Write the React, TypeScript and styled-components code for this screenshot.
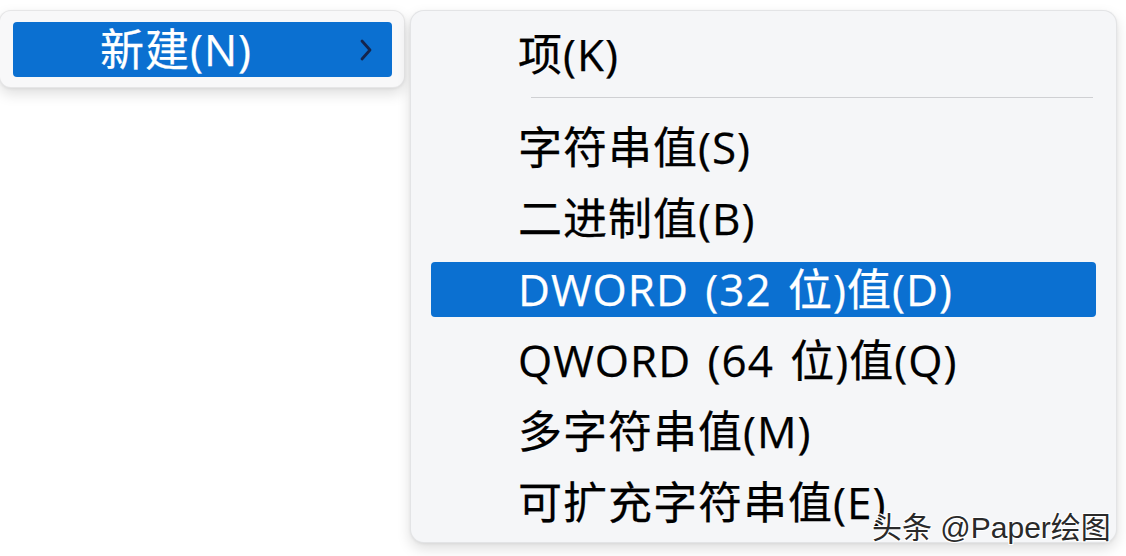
import React from "react";
import styled, { createGlobalStyle } from "styled-components";

const Global = createGlobalStyle`
  html, body { margin: 0; padding: 0; background: #ffffff; }
  body {
    width: 1126px;
    height: 556px;
    overflow: hidden;
    font-family: "Open Sans", "Noto Sans CJK SC", sans-serif;
  }
`;

const Page = styled.div`
  position: relative;
  width: 1126px;
  height: 556px;
  display: flex;
  align-items: flex-start;
  gap: 5px;
  padding-top: 10px;
  box-sizing: border-box;
`;

const Panel = styled.div<{ $w: number }>`
  width: ${(p) => p.$w}px;
  box-sizing: border-box;
  background: #f5f6f8;
  border: 1px solid rgba(0, 0, 0, 0.07);
  border-radius: 12px;
  box-shadow: 0 6px 14px rgba(0, 0, 0, 0.13), 0 1px 3px rgba(0, 0, 0, 0.06);
  display: flex;
  flex-direction: column;
`;

const LeftPanel = styled(Panel)`
  padding: 11px 12px 10px 13px;
  margin-left: -1px;
  background: #f8f8f9;
`;

const RightPanel = styled(Panel)`
  padding: 8px 20px 4px 20px;
  height: 533px;
  border-radius: 14px;
`;

const Row = styled.div<{ $h: number }>`
  height: ${(p) => p.$h}px;
  padding: ${(p) => (p.$h - 55) / 2}px 0;
  box-sizing: border-box;
  display: flex;
`;

const ItemBox = styled.div<{ $active?: boolean }>`
  flex: 1;
  display: flex;
  align-items: center;
  justify-content: space-between;
  padding-left: 87px;
  padding-right: 19px;
  border-radius: 4px;
  background: ${(p) => (p.$active ? "#0b70d1" : "transparent")};
  color: ${(p) => (p.$active ? "#ffffff" : "#000000")};
  font-size: 44px;
  line-height: 1;
  white-space: nowrap;
  letter-spacing: 1px;
  word-spacing: 4px;
  -webkit-text-stroke: 0.25px ${(p) => (p.$active ? "#ffffff" : "#000000")};
`;

const Label = styled.span`
  display: block;
  transform: translateY(-1px);
`;

const Separator = styled.div`
  height: 1px;
  background: #cfd0d3;
  margin: 6px 3px 14px 100px;
`;

const Chevron = styled.svg`
  width: 14px;
  height: 24px;
  flex: none;
`;

const Watermark = styled.div`
  position: absolute;
  left: 872px;
  top: 511px;
  font-family: "Liberation Sans", "Noto Sans CJK SC", sans-serif;
  font-size: 30px;
  line-height: 1.1;
  color: #2a2a2a;
  white-space: nowrap;
  text-shadow: 1px 1px 0 #fff, -1px -1px 0 #fff, 1px -1px 0 #fff, -1px 1px 0 #fff;
`;

const items: { label: string; active?: boolean }[] = [
  { label: "字符串值(S)" },
  { label: "二进制值(B)" },
  { label: "DWORD (32 位)值(D)", active: true },
  { label: "QWORD (64 位)值(Q)" },
  { label: "多字符串值(M)" },
  { label: "可扩充字符串值(E)" },
];

export default function App() {
  return (
    <>
      <Global />
      <Page>
        <LeftPanel $w={406}>
          <Row $h={55}>
            <ItemBox $active>
              <Label>新建(N)</Label>
              <Chevron viewBox="0 0 14 24">
                <polyline
                  points="3,3 11,12 3,21"
                  fill="none"
                  stroke="#15254d"
                  strokeWidth="2.8"
                  strokeLinecap="round"
                  strokeLinejoin="round"
                />
              </Chevron>
            </ItemBox>
          </Row>
        </LeftPanel>
        <RightPanel $w={707}>
          <Row $h={72}>
            <ItemBox>
              <Label>项(K)</Label>
            </ItemBox>
          </Row>
          <Separator />
          {items.map((it) => (
            <Row $h={71} key={it.label}>
              <ItemBox $active={it.active}>
                <Label>{it.label}</Label>
              </ItemBox>
            </Row>
          ))}
        </RightPanel>
        <Watermark>头条 @Paper绘图</Watermark>
      </Page>
    </>
  );
}
